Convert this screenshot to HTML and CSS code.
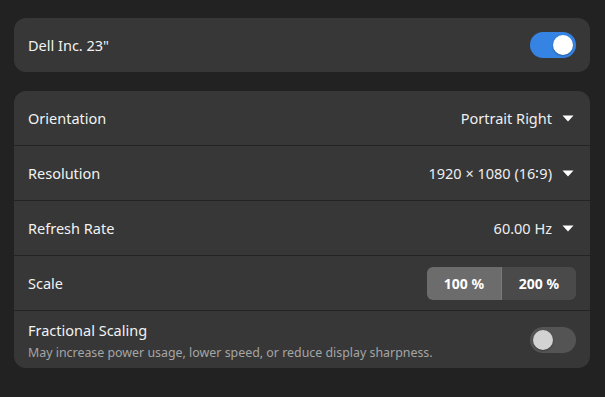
FILE: index.html
```html
<!DOCTYPE html>
<html lang="en">
<head>
    <meta charset="UTF-8">
    <meta name="viewport" content="width=device-width, initial-scale=1.0">
    <title>Displays</title>
    <link rel="stylesheet" href="styles.css">
</head>
<body>
    <div class="card">
        <div class="row">
            <span class="title">Dell Inc. 23"</span>
            <span class="switch on"><span class="knob"></span></span>
        </div>
    </div>

    <div class="card">
        <div class="row">
            <span class="title">Orientation</span>
            <span class="value">Portrait Right
                <svg class="arrow" width="12" height="7" viewBox="0 0 12 7"><path d="M0.5 0.5 L11.5 0.5 L6 6.5 Z" fill="#ffffff"/></svg>
            </span>
        </div>
        <div class="row">
            <span class="title">Resolution</span>
            <span class="value">1920 × 1080 (16∶9)
                <svg class="arrow" width="12" height="7" viewBox="0 0 12 7"><path d="M0.5 0.5 L11.5 0.5 L6 6.5 Z" fill="#ffffff"/></svg>
            </span>
        </div>
        <div class="row">
            <span class="title">Refresh Rate</span>
            <span class="value">60.00 Hz
                <svg class="arrow" width="12" height="7" viewBox="0 0 12 7"><path d="M0.5 0.5 L11.5 0.5 L6 6.5 Z" fill="#ffffff"/></svg>
            </span>
        </div>
        <div class="row">
            <span class="title">Scale</span>
            <div class="segmented">
                <button class="seg active">100 %</button>
                <button class="seg">200 %</button>
            </div>
        </div>
        <div class="row tall">
            <div class="text">
                <span class="title">Fractional Scaling</span>
                <span class="subtitle">May increase power usage, lower speed, or reduce display sharpness.</span>
            </div>
            <span class="switch"><span class="knob"></span></span>
        </div>
    </div>
</body>
</html>
```

FILE: styles.css
```css
body {
    font-family: "Noto Sans", sans-serif;
    margin: 0;
    padding: 18px 15px 18px 14px;
    background-color: #222222;
    color: #ffffff;
    font-size: 14.5px;
}

.card {
    background-color: #373737;
    border-radius: 12px;
    margin-bottom: 19px;
    overflow: hidden;
}

.row {
    display: flex;
    align-items: center;
    justify-content: space-between;
    height: 54px;
    padding: 0 14px 0 14px;
    border-bottom: 1px solid #242424;
}

.row:last-child {
    border-bottom: none;
}

.row.tall {
    height: 57px;
}

.title {
    color: #f2f2f2;
}

.text {
    display: flex;
    flex-direction: column;
    padding-top: 2px;
}

.subtitle {
    font-size: 12.4px;
    color: #a5a5a5;
    margin-top: 4px;
}

.value {
    display: flex;
    align-items: center;
    gap: 10px;
    color: #eeeeee;
    padding-right: 2px;
}

.arrow {
    margin-top: 1px;
}

.switch {
    display: flex;
    align-items: center;
    width: 46px;
    height: 26px;
    border-radius: 13px;
    background-color: #545454;
    padding: 3px;
    box-sizing: border-box;
}

.switch .knob {
    width: 20px;
    height: 20px;
    border-radius: 50%;
    background-color: #d2d2d2;
    box-shadow: 0 1px 2px rgba(0, 0, 0, 0.3);
}

.switch.on {
    background-color: #3584e4;
    justify-content: flex-end;
}

.switch.on .knob {
    background-color: #ffffff;
}

.segmented {
    display: flex;
    border-radius: 6px;
    overflow: hidden;
}

.seg {
    font-family: "Noto Sans", sans-serif;
    font-size: 14px;
    font-weight: bold;
    color: #ffffff;
    background-color: #4a4a4a;
    border: none;
    width: 74px;
    height: 33px;
    padding: 0;
}

.seg.active {
    background-color: #6c6c6c;
    border-right: 1px solid #7a7a7a;
    width: 75px;
}
```
